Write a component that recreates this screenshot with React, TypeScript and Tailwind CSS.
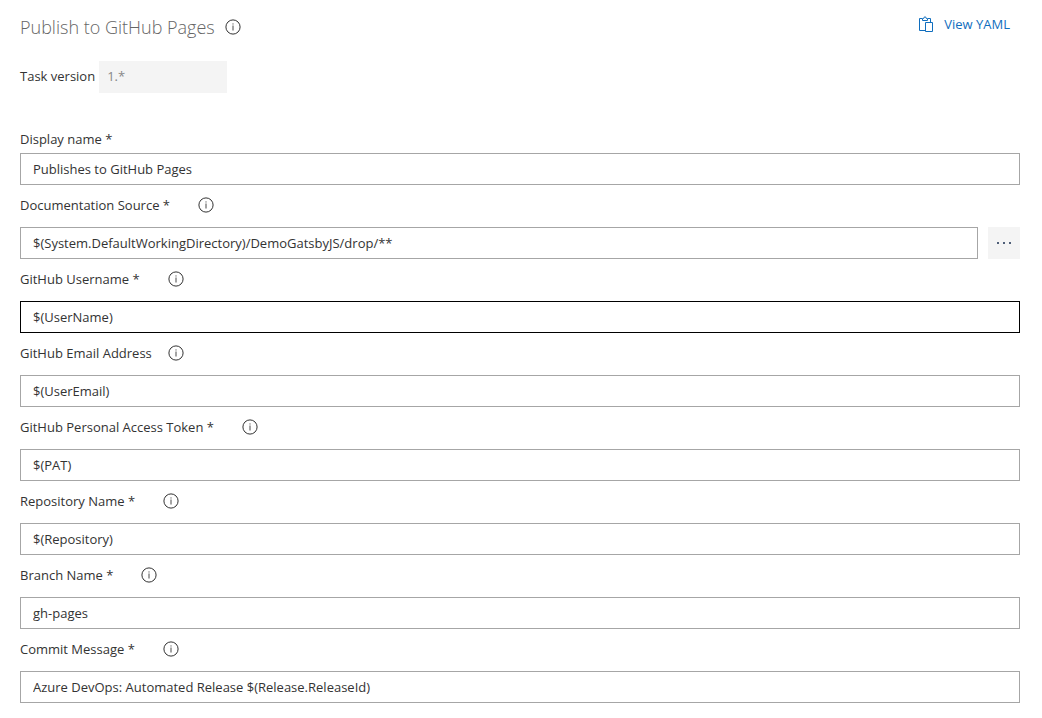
import { useState } from "react";
import clsx from "clsx";

interface TaskField {
  id: string;
  label: string;
  value: string;
  required?: boolean;
  info?: boolean;
  browse?: boolean;
  active?: boolean;
}

const taskFields: TaskField[] = [
  { id: "display-name", label: "Display name", value: "Publishes to GitHub Pages", required: true },
  {
    id: "docs-source",
    label: "Documentation Source",
    value: "$(System.DefaultWorkingDirectory)/DemoGatsbyJS/drop/**",
    required: true,
    info: true,
    browse: true,
  },
  { id: "username", label: "GitHub Username", value: "$(UserName)", required: true, info: true, active: true },
  { id: "email", label: "GitHub Email Address", value: "$(UserEmail)", info: true },
  { id: "token", label: "GitHub Personal Access Token", value: "$(PAT)", required: true, info: true },
  { id: "repository", label: "Repository Name", value: "$(Repository)", required: true, info: true },
  { id: "branch", label: "Branch Name", value: "gh-pages", required: true, info: true },
  {
    id: "commit-message",
    label: "Commit Message",
    value: "Azure DevOps: Automated Release $(Release.ReleaseId)",
    required: true,
    info: true,
  },
];

function InfoButton({ label }: { label: string }) {
  return (
    <button type="button" aria-label={`About ${label}`} className="size-4 shrink-0 text-[#333333]">
      <svg viewBox="0 0 16 16" className="size-4" fill="none" stroke="currentColor">
        <circle cx="8" cy="8" r="7.1" />
        <path d="M8 6.500v5M8 4.400v1.100" strokeWidth="0.9" />
      </svg>
    </button>
  );
}

function ClipboardIcon() {
  return (
    <svg viewBox="0 0 16 16" className="size-4" fill="none" stroke="currentColor">
      <path d="M7 14.500H1.500v-12h2.500M10 2.500h2.500V6" />
      <path d="M4.500 4.500v-2h1.200a1.300 1.600 0 0 1 2.600 0h1.200v2z" />
      <path d="M7.500 6.500h7v9h-7z" />
    </svg>
  );
}

function Field({ field }: { field: TaskField }) {
  const [value, setValue] = useState(field.value);
  return (
    <div>
      <div className={clsx("flex items-center gap-4", field.info ? "pt-2.5 pb-3" : "pb-1")}>
        <label htmlFor={field.id} className={clsx("leading-5", field.required && "pr-3")}>
          {field.label}
          {field.required && " *"}
        </label>
        {field.info && <InfoButton label={field.label} />}
      </div>
      <div className="flex gap-2.5">
        <input
          id={field.id}
          type="text"
          value={value}
          onChange={(e) => setValue(e.target.value)}
          className={clsx(
            "h-8 min-w-0 flex-1 border bg-white px-3 outline-none",
            field.active ? "border-black" : "border-[#a6a6a6] focus:border-black",
          )}
        />
        {field.browse && (
          <button
            type="button"
            aria-label="Browse"
            className="flex size-8 items-center justify-center bg-[#f4f4f4] text-[#4f5f78]"
          >
            <svg viewBox="0 0 16 16" className="size-4" fill="currentColor">
              <path d="M1 7h2v2H1zM7 7h2v2H7zM13 7h2v2h-2z" />
            </svg>
          </button>
        )}
      </div>
    </div>
  );
}

export default function App() {
  return (
    <main className="bg-white pt-3 pr-[22px] pb-4 pl-5 font-['Open_Sans',sans-serif] text-[13px] text-[#333333]">
      <header className="flex items-start justify-between">
        <div className="flex items-center gap-2.5 pt-px">
          <h1 className="text-lg leading-7 font-light text-[#666666]">Publish to GitHub Pages</h1>
          <InfoButton label="Publish to GitHub Pages" />
        </div>
        <button type="button" className="mr-2.5 flex items-center gap-2.5 leading-6 text-[#106ebe]">
          <ClipboardIcon />
          View YAML
        </button>
      </header>

      <div className="mt-5 flex items-center gap-1">
        <label htmlFor="task-version">Task version</label>
        <select
          id="task-version"
          disabled
          className="h-8 w-32 appearance-none bg-[#f4f4f4] px-2 text-[#888888] opacity-100"
        >
          <option>1.*</option>
        </select>
      </div>

      <form className="mt-9">
        {taskFields.map((field) => (
          <Field key={field.id} field={field} />
        ))}
      </form>
    </main>
  );
}
